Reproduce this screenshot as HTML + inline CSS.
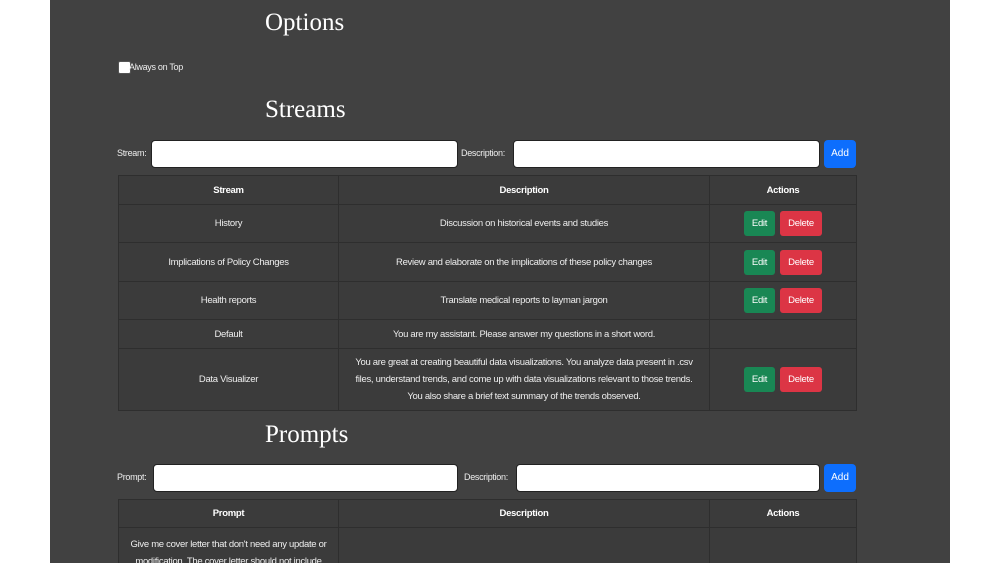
<!DOCTYPE html><html><head><style>
html,body{margin:0;width:1000px;height:563px;overflow:hidden}
body{background:#fff;font-family:"Liberation Sans",sans-serif;position:relative}
#m{position:absolute;left:50px;top:0;width:900px;height:563px;background:#414141;color:#eee;overflow:hidden}
.a{position:absolute}
h2{position:absolute;margin:0;font-family:"Liberation Serif",serif;font-weight:normal;font-size:25px;color:#fff}
.lbl{position:absolute;font-size:9px;color:#eee;letter-spacing:-0.3px}
.inp{position:absolute;background:#fff;border:1px solid #222;border-radius:4px;height:26px}
.add{position:absolute;background:#0d6efd;color:#fff;font-size:10px;border-radius:4px;width:32px;height:28px;line-height:28px;text-align:center}
table{position:absolute;border-collapse:collapse;background:#3b3b3b;font-size:9.5px;color:#eee;table-layout:fixed;letter-spacing:-0.3px}
td,th{border:1px solid #2e2e2e;text-align:center;padding:0 10px;line-height:17px}
th{font-weight:bold;color:#fff}
.e,.d{display:inline-block;color:#fff;border-radius:3px;height:25px;line-height:25px;font-size:9.5px}
.e{background:#198754;width:31px}.d{background:#dc3545;width:42px;margin-left:5px}
</style></head><body><div id="m">
<h2 style="left:215px;top:9px">Options</h2>
<div class="a" style="left:68px;top:61px;width:11px;height:11px;background:#fff;border:1px solid #555;border-radius:2px"></div>
<div class="lbl" style="left:79px;top:62px">Always on Top</div>
<h2 style="left:215px;top:96px">Streams</h2>
<div class="lbl" style="left:67px;top:148px">Stream:</div>
<div class="inp" style="left:101px;top:140px;width:305px"></div>
<div class="lbl" style="left:411px;top:148px">Description:</div>
<div class="inp" style="left:463px;top:140px;width:305px"></div>
<div class="add" style="left:774px;top:140px">Add</div>
<table style="left:68px;top:175px;width:738px">
<colgroup><col style="width:220px"><col style="width:371px"><col style="width:147px"></colgroup>
<tr style="height:29px"><th>Stream</th><th>Description</th><th>Actions</th></tr>
<tr style="height:38px"><td>History</td><td>Discussion on historical events and studies</td><td><span class="e">Edit</span><span class="d">Delete</span></td></tr>
<tr style="height:39px"><td>Implications of Policy Changes</td><td>Review and elaborate on the implications of these policy changes</td><td><span class="e">Edit</span><span class="d">Delete</span></td></tr>
<tr style="height:38px"><td>Health reports</td><td>Translate medical reports to layman jargon</td><td><span class="e">Edit</span><span class="d">Delete</span></td></tr>
<tr style="height:29px"><td>Default</td><td>You are my assistant. Please answer my questions in a short word.</td><td></td></tr>
<tr style="height:62px"><td>Data Visualizer</td><td>You are great at creating beautiful data visualizations. You analyze data present in .csv files, understand trends, and come up with data visualizations relevant to those trends. You also share a brief text summary of the trends observed.</td><td><span class="e">Edit</span><span class="d">Delete</span></td></tr>
</table>
<h2 style="left:215px;top:421px">Prompts</h2>
<div class="lbl" style="left:67px;top:472px">Prompt:</div>
<div class="inp" style="left:103px;top:464px;width:303px"></div>
<div class="lbl" style="left:414px;top:472px">Description:</div>
<div class="inp" style="left:466px;top:464px;width:302px"></div>
<div class="add" style="left:774px;top:464px">Add</div>
<table style="left:68px;top:499px;width:738px">
<colgroup><col style="width:220px"><col style="width:371px"><col style="width:147px"></colgroup>
<tr style="height:28px"><th>Prompt</th><th>Description</th><th>Actions</th></tr>
<tr style="height:60px"><td style="vertical-align:top;padding-top:8px">Give me cover letter that don't need any update or modification. The cover letter should not include</td><td></td><td></td></tr>
</table>
</div></body></html>
